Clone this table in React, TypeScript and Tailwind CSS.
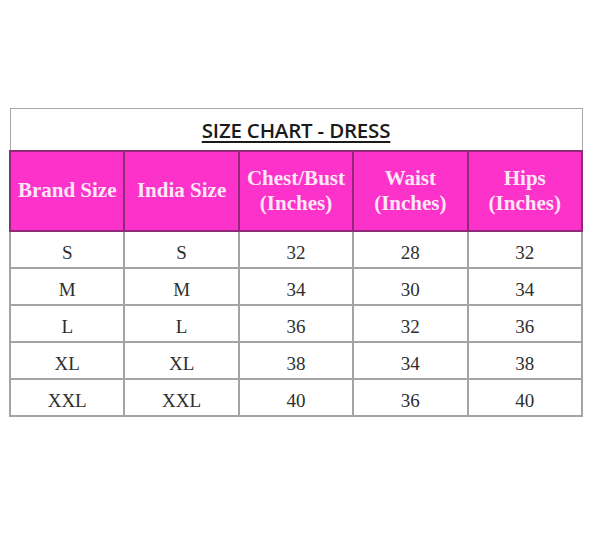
import React from "react";

const rows = [
  ["S", "S", "32", "28", "32"],
  ["M", "M", "34", "30", "34"],
  ["L", "L", "36", "32", "36"],
  ["XL", "XL", "38", "34", "38"],
  ["XXL", "XXL", "40", "36", "40"],
];

const headers: [string, string?][] = [
  ["Brand Size"],
  ["India Size"],
  ["Chest/Bust", "(Inches)"],
  ["Waist", "(Inches)"],
  ["Hips", "(Inches)"],
];

export default function App() {
  return (
    <div className="h-[540px] w-[600px] bg-white pl-[9px] pt-[108px]">
      <table className="w-[574px] table-fixed border-collapse border border-[#a8a8a8] font-['Liberation_Serif',serif]">
        <tbody>
          <tr className="h-[42px]">
            <td colSpan={5} className="border border-[#a8a8a8] pt-[3px] text-center align-middle">
              <span className="font-['Open_Sans',sans-serif] text-[20.5px] font-semibold tracking-[-0.2px] text-[#1a1a1a] underline decoration-[1.5px] underline-offset-[3px]">
                SIZE CHART - DRESS
              </span>
            </td>
          </tr>
          <tr className="h-[80px] bg-[#fd32cb]">
            {headers.map(([a, b], i) => (
              <td
                key={i}
                className="border-2 border-[#8e2a78] text-center align-middle text-[21px] font-bold leading-[25px] text-[#fde8f6]"
              >
                <div>{a}</div>
                {b && <div>{b}</div>}
              </td>
            ))}
          </tr>
          {rows.map((r, i) => (
            <tr key={i} className="h-[37px]">
              {r.map((c, j) => (
                <td
                  key={j}
                  className="border-2 border-[#a4a4a4] pt-[8px] text-center align-middle text-[19px] leading-[26px] text-[#2e2e2e]"
                >
                  {c}
                </td>
              ))}
            </tr>
          ))}
        </tbody>
      </table>
    </div>
  );
}
